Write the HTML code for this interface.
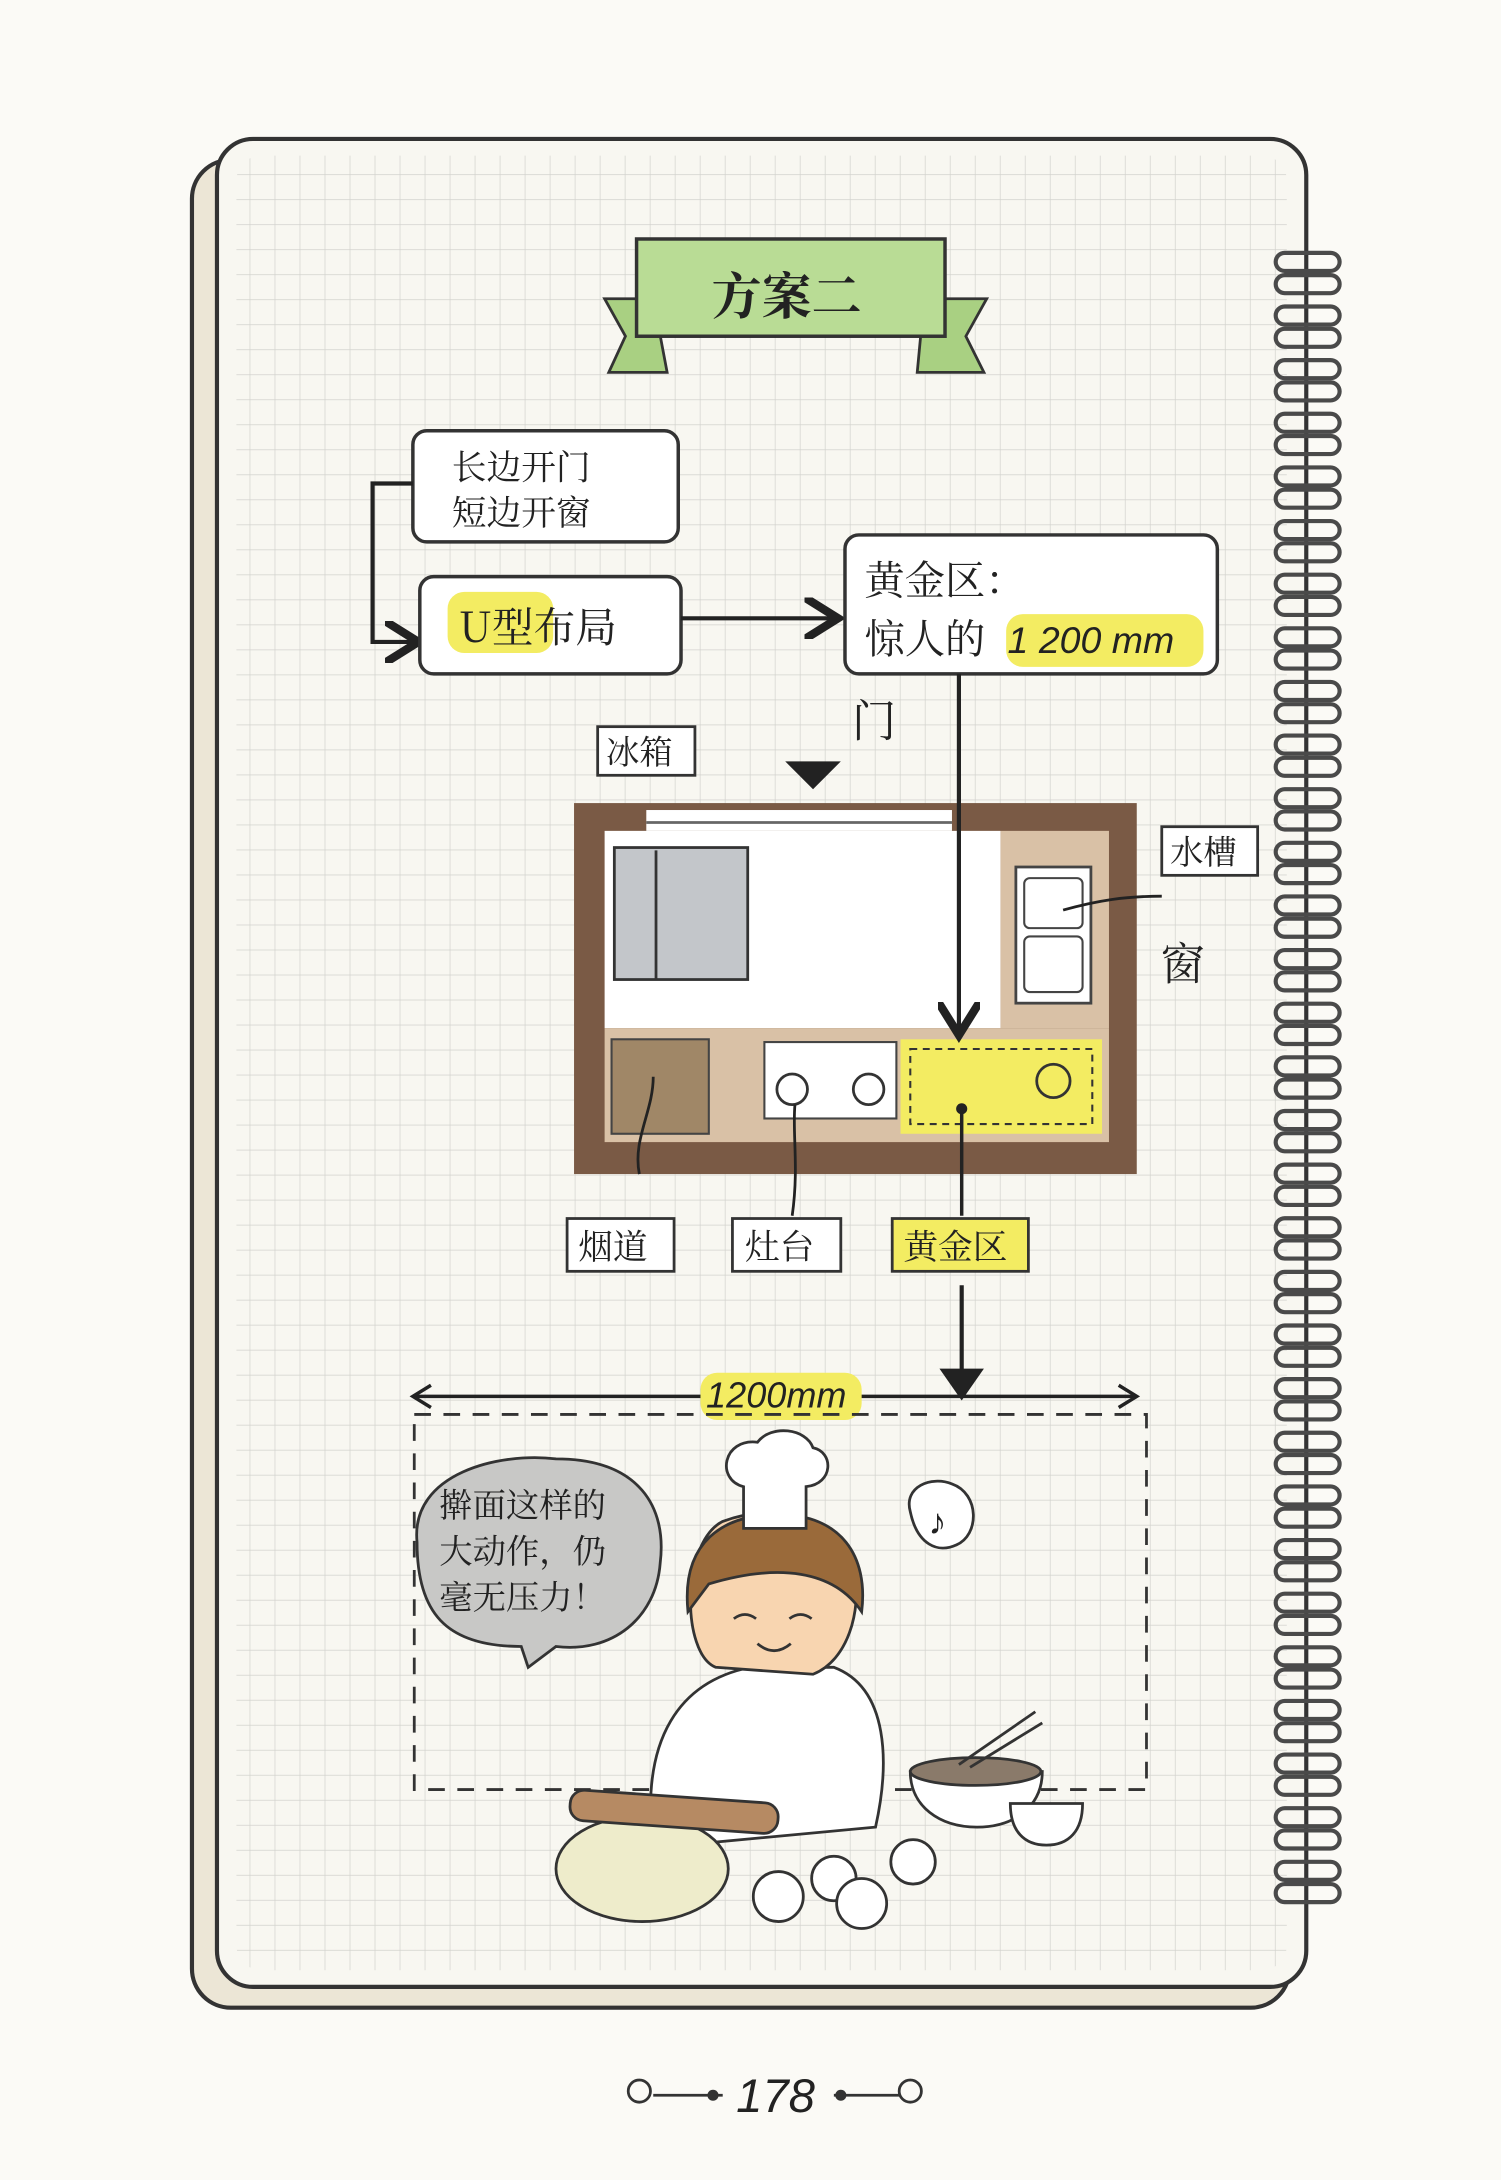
<!DOCTYPE html>
<html><head><meta charset="utf-8">
<style>
html,body{margin:0;padding:0;background:#fbfaf6;}
svg{display:block}
text{font-family:"Liberation Sans","Noto Sans CJK SC",sans-serif;fill:#222}
.cjk{font-family:"Noto Serif CJK SC","Noto Sans CJK SC",serif}
</style></head>
<body>
<svg width="1501" height="2180" viewBox="0 0 1080 1569" xmlns="http://www.w3.org/2000/svg">
<defs>
<pattern id="g" width="18" height="18" patternUnits="userSpaceOnUse">
<path d="M18 0V18H0" fill="none" stroke="#d2d2cd" stroke-width="1"/>
</pattern>
<marker id="ah" markerWidth="10" markerHeight="10" refX="7" refY="5" orient="auto"><path d="M0,0 L8,5 L0,10" fill="none" stroke="#222" stroke-width="2"/></marker>
</defs>
<rect width="1080" height="1569" fill="#fbfaf6"/>
<rect x="138" y="115" width="790" height="1330" rx="28" fill="#ece6d6" stroke="#333" stroke-width="3"/>
<rect x="156" y="100" width="784" height="1330" rx="26" fill="#f8f7f1" stroke="#333" stroke-width="3"/>
<rect x="170" y="112" width="756" height="1306" rx="18" fill="url(#g)"/>
<g id="rings" fill="none" stroke="#4a4a4a" stroke-width="3"></g>
<polygon points="470,215 435,215 450,242 438,268 480,268" fill="#a9d082" stroke="#333" stroke-width="2"/>
<polygon points="665,215 710,215 695,242 708,268 660,268" fill="#a9d082" stroke="#333" stroke-width="2"/>
<rect x="458" y="172" width="222" height="70" fill="#b9dc95" stroke="#333" stroke-width="2.5"/>
<text x="566" y="226" font-size="36" text-anchor="middle" class="cjk" font-weight="bold">方案二</text>
<rect x="297" y="310" width="191" height="80" rx="10" fill="#fff" stroke="#333" stroke-width="2.5"/>
<text x="325" y="345" font-size="25" class="cjk">长边开门</text>
<text x="325" y="378" font-size="25" class="cjk">短边开窗</text>
<path d="M297,348 H268 V462 H298" fill="none" stroke="#222" stroke-width="3" marker-end="url(#ah)"/>
<rect x="302" y="415" width="188" height="70" rx="10" fill="#fff" stroke="#333" stroke-width="2.5"/>
<rect x="322" y="426" width="76" height="44" rx="12" fill="#f3ec62"/>
<text x="330" y="462" font-size="30" class="cjk">U型布局</text>
<path d="M490,445 H600" fill="none" stroke="#222" stroke-width="3" marker-end="url(#ah)"/>
<rect x="608" y="385" width="268" height="100" rx="10" fill="#fff" stroke="#333" stroke-width="2.5"/>
<rect x="724" y="442" width="142" height="38" rx="12" fill="#f3ec62"/>
<text x="622" y="428" font-size="29" class="cjk">黄金区：</text>
<text x="622" y="470" font-size="29" class="cjk">惊人的</text>
<text x="725" y="470" font-size="27" font-style="italic">1 200 mm</text>
<text x="613" y="530" font-size="32" class="cjk">门</text>
<polygon points="565,548 605,548 585,568" fill="#222"/>
<rect x="430" y="523" width="70" height="35" fill="#fff" stroke="#333" stroke-width="2"/>
<text x="436" y="550" font-size="24" class="cjk">冰箱</text>
<rect x="413" y="578" width="405" height="267" fill="#7a5a45"/>
<rect x="435" y="598" width="285" height="142" fill="#fff"/>
<rect x="720" y="598" width="78" height="142" fill="#d9c1a6"/>
<rect x="435" y="740" width="363" height="82" fill="#d9c1a6"/>
<rect x="465" y="583" width="220" height="15" fill="#fff"/>
<line x1="465" y1="592" x2="685" y2="592" stroke="#666" stroke-width="2"/>
<rect x="442" y="610" width="96" height="95" fill="#c3c6ca" stroke="#333" stroke-width="2"/>
<path d="M472,612 V705" stroke="#333" stroke-width="2"/>
<rect x="731" y="624" width="54" height="98" fill="#fff" stroke="#444" stroke-width="2"/>
<rect x="737" y="632" width="42" height="36" rx="4" fill="none" stroke="#444" stroke-width="1.5"/>
<rect x="737" y="674" width="42" height="40" rx="4" fill="none" stroke="#444" stroke-width="1.5"/>
<rect x="440" y="748" width="70" height="68" fill="#a08767" stroke="#444" stroke-width="1.5"/>
<rect x="550" y="750" width="95" height="55" fill="#fff" stroke="#444" stroke-width="1.5"/>
<circle cx="570" cy="784" r="11" fill="none" stroke="#333" stroke-width="2"/>
<circle cx="625" cy="784" r="11" fill="none" stroke="#333" stroke-width="2"/>
<rect x="648" y="748" width="145" height="68" fill="#f3ec62"/>
<rect x="655" y="755" width="131" height="54" fill="none" stroke="#333" stroke-width="1.5" stroke-dasharray="5,4"/>
<circle cx="758" cy="778" r="12" fill="none" stroke="#333" stroke-width="2"/>
<path d="M690,485 V742" fill="none" stroke="#222" stroke-width="3" marker-end="url(#ah)"/>
<path d="M692,798 V875" stroke="#222" stroke-width="2.5"/><circle cx="692" cy="798" r="4" fill="#222"/>
<path d="M460,845 C455,820 470,800 470,775" fill="none" stroke="#222" stroke-width="2"/>
<path d="M570,875 C575,840 570,815 572,795" fill="none" stroke="#222" stroke-width="2"/>
<rect x="836" y="595" width="69" height="35" fill="#fff" stroke="#333" stroke-width="2"/>
<text x="842" y="622" font-size="24" class="cjk">水槽</text>
<path d="M836,645 C810,645 790,648 765,655" fill="none" stroke="#222" stroke-width="2"/>
<text x="835" y="705" font-size="32" class="cjk">窗</text>
<rect x="408" y="877" width="77" height="38" fill="#fff" stroke="#333" stroke-width="2"/>
<text x="416" y="906" font-size="25" class="cjk">烟道</text>
<rect x="527" y="877" width="78" height="38" fill="#fff" stroke="#333" stroke-width="2"/>
<text x="536" y="906" font-size="25" class="cjk">灶台</text>
<rect x="642" y="877" width="98" height="38" fill="#f3ec62" stroke="#333" stroke-width="2"/>
<text x="650" y="906" font-size="25" class="cjk">黄金区</text>
<path d="M692,925 V995" stroke="#222" stroke-width="3"/>
<polygon points="676,985 708,985 692,1008" fill="#222"/>
<path d="M297,1005 H818" stroke="#222" stroke-width="2.5"/>
<path d="M310,997 L297,1005 L310,1013 M805,997 L818,1005 L805,1013" fill="none" stroke="#222" stroke-width="2.5"/>
<rect x="504" y="988" width="116" height="34" rx="12" fill="#f3ec62"/>
<text x="508" y="1013" font-size="26" font-style="italic">1200mm</text>
<rect x="298" y="1018" width="527" height="270" fill="none" stroke="#333" stroke-width="2" stroke-dasharray="12,9"/>
<path d="M300,1110 C295,1060 360,1045 400,1050 C460,1050 480,1085 475,1125 C472,1165 440,1190 400,1185 L380,1200 L375,1185 C320,1185 300,1160 300,1110Z" fill="#c8c8c6" stroke="#333" stroke-width="2"/>
<text x="316" y="1092" font-size="24" class="cjk">擀面这样的</text>
<text x="316" y="1125" font-size="24" class="cjk">大动作，仍</text>
<text x="316" y="1158" font-size="24" class="cjk">毫无压力！</text>
<path d="M655,1088 C650,1070 670,1062 685,1068 C705,1075 705,1105 688,1112 C675,1118 660,1112 655,1088Z" fill="#fff" stroke="#333" stroke-width="2"/>
<text x="668" y="1104" font-size="26">♪</text>
<path d="M470,1330 C460,1250 490,1210 540,1200 L600,1200 C640,1215 640,1270 630,1315 Z" fill="#fff" stroke="#333" stroke-width="2"/>
<ellipse cx="462" cy="1345" rx="62" ry="38" fill="#eeeccb" stroke="#333" stroke-width="2"/>
<rect x="410" y="1293" width="150" height="22" rx="10" fill="#b68a63" stroke="#333" stroke-width="2" transform="rotate(4 485 1304)"/>
<path d="M515,1200 C490,1190 490,1110 520,1095 C560,1080 600,1095 615,1130 C620,1160 610,1195 585,1205 Z" fill="#f8d5b0" stroke="#333" stroke-width="2"/>
<path d="M495,1160 C490,1110 520,1090 560,1090 C605,1090 625,1120 620,1160 C600,1130 560,1125 510,1140 Z" fill="#9a6a3a" stroke="#333" stroke-width="2"/>
<path d="M535,1100 L535,1070 C515,1065 520,1035 545,1038 C555,1025 580,1028 585,1042 C600,1045 600,1068 580,1070 L580,1100 Z" fill="#fff" stroke="#333" stroke-width="2"/>
<path d="M528,1165 q8,-6 16,0 M568,1165 q8,-6 16,0 M545,1183 q12,10 24,0" fill="none" stroke="#333" stroke-width="2"/>
<path d="M655,1275 h95 c0,25 -20,40 -47,40 c-27,0 -48,-15 -48,-40z" fill="#fff" stroke="#333" stroke-width="2"/>
<ellipse cx="702" cy="1275" rx="47" ry="10" fill="#8a7a6a" stroke="#333" stroke-width="2"/>
<path d="M690,1270 L745,1232 M698,1272 L750,1240" stroke="#333" stroke-width="2"/>
<path d="M727,1298 h52 c0,20 -10,30 -26,30 c-16,0 -26,-10 -26,-30z" fill="#fff" stroke="#333" stroke-width="2"/>
<g fill="#fff" stroke="#333" stroke-width="2">
<circle cx="560" cy="1365" r="18"/><circle cx="600" cy="1352" r="16"/><circle cx="620" cy="1370" r="18"/><circle cx="657" cy="1340" r="16"/>
</g>
<path d="M470,1508 H520 M600,1508 H648" stroke="#333" stroke-width="2"/>
<circle cx="460" cy="1505" r="8" fill="none" stroke="#333" stroke-width="2"/>
<circle cx="655" cy="1505" r="8" fill="none" stroke="#333" stroke-width="2"/>
<circle cx="513" cy="1508" r="4" fill="#333"/><circle cx="605" cy="1508" r="4" fill="#333"/>
<text x="558" y="1520" font-size="34" font-style="italic" text-anchor="middle">178</text>
</svg>
<script>
(function(){
 var g=document.getElementById('rings'),ns='http://www.w3.org/2000/svg';
 for(var i=0;i<31;i++){
  var y=182+i*38.6;
  for(var k=0;k<2;k++){
   var r=document.createElementNS(ns,'rect');
   r.setAttribute('x',918);r.setAttribute('y',y+k*16);
   r.setAttribute('width',46);r.setAttribute('height',13);r.setAttribute('rx',6.5);
   g.appendChild(r);
  }
 }
})();
</script>
</body></html>
